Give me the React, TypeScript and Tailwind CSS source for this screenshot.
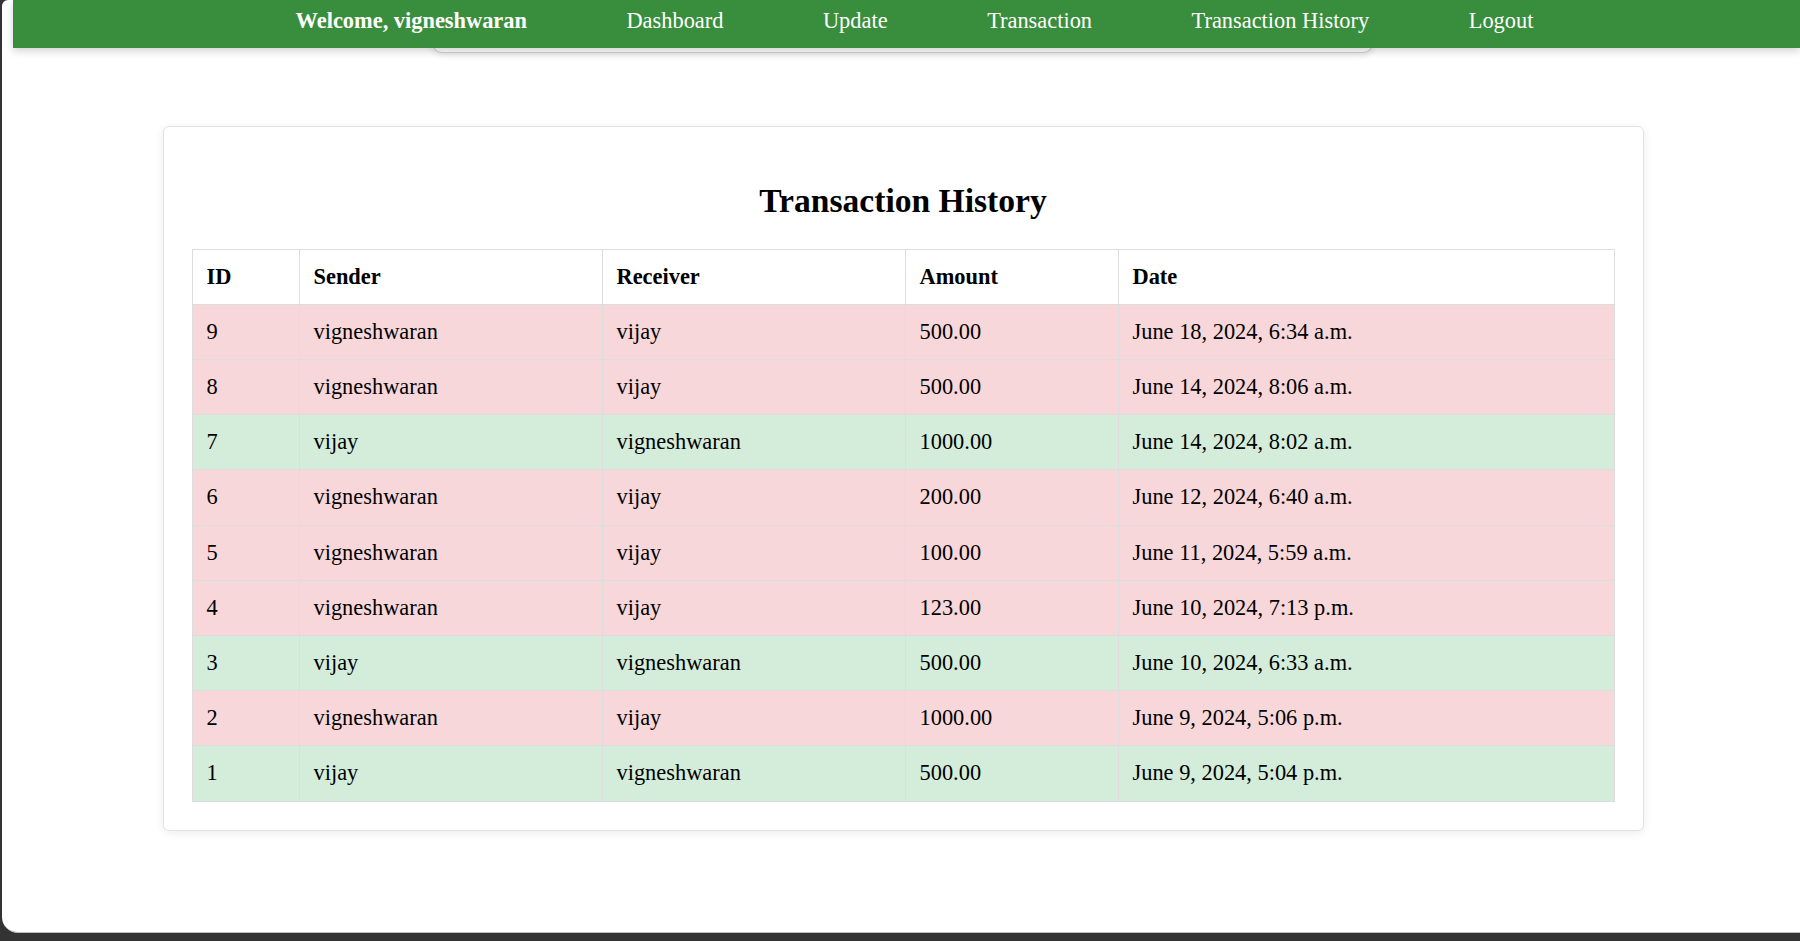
import React from "react";

type Tx = { id: number; sender: string; receiver: string; amount: string; date: string };

const me = "vigneshwaran";

const rows: Tx[] = [
  { id: 9, sender: "vigneshwaran", receiver: "vijay", amount: "500.00", date: "June 18, 2024, 6:34 a.m." },
  { id: 8, sender: "vigneshwaran", receiver: "vijay", amount: "500.00", date: "June 14, 2024, 8:06 a.m." },
  { id: 7, sender: "vijay", receiver: "vigneshwaran", amount: "1000.00", date: "June 14, 2024, 8:02 a.m." },
  { id: 6, sender: "vigneshwaran", receiver: "vijay", amount: "200.00", date: "June 12, 2024, 6:40 a.m." },
  { id: 5, sender: "vigneshwaran", receiver: "vijay", amount: "100.00", date: "June 11, 2024, 5:59 a.m." },
  { id: 4, sender: "vigneshwaran", receiver: "vijay", amount: "123.00", date: "June 10, 2024, 7:13 p.m." },
  { id: 3, sender: "vijay", receiver: "vigneshwaran", amount: "500.00", date: "June 10, 2024, 6:33 a.m." },
  { id: 2, sender: "vigneshwaran", receiver: "vijay", amount: "1000.00", date: "June 9, 2024, 5:06 p.m." },
  { id: 1, sender: "vijay", receiver: "vigneshwaran", amount: "500.00", date: "June 9, 2024, 5:04 p.m." },
];

const links = ["Dashboard", "Update", "Transaction", "Transaction History", "Logout"];

export default function App() {
  return (
    <div className="w-[1800px] h-[941px] bg-[#333] pl-[2px] pb-[8px] overflow-hidden font-['Liberation_Serif',serif] text-black">
      <div className="relative h-full bg-white rounded-bl-[16px] rounded-tl-[6px] overflow-hidden border-b border-[#bdbdbd]">
        {/* menu list peeking out under the bar */}
        <div className="absolute top-0 left-[430px] w-[941px] h-[53px] bg-white border border-[#cfcfcf] rounded-[10px] shadow-[0_2px_6px_rgba(0,0,0,0.12)]" />

        <nav className="relative z-10 ml-[11px] h-[48px] bg-[#388e3c] shadow-[0_3px_8px_rgba(0,0,0,0.18)] flex justify-center gap-[99.5px] pl-[16px] pt-[8px] text-white text-[22.4px] leading-[1.15]">
          <span className="font-bold">Welcome, {me}</span>
          {links.map((l) => (
            <a key={l} href="#" className="text-white">
              {l}
            </a>
          ))}
        </nav>

        <div className="pl-[4px]">
          <div className="mt-[78px] w-[1481px] mx-auto bg-white border border-[#e2e2e2] rounded-[6px] shadow-[0_2px_10px_rgba(0,0,0,0.08)] p-[28px]">
            <h2 className="text-center font-bold text-[33.6px] leading-[1.15] mt-[27px] mb-[28px]">Transaction History</h2>
            <table className="w-full border-collapse text-[22.4px] leading-[26.2px]">
              <thead>
                <tr className="bg-white">
                  <th className="w-[107px] border border-[#dddddd] p-[14px] text-left font-bold">ID</th>
                  <th className="w-[303px] border border-[#dddddd] p-[14px] text-left font-bold">Sender</th>
                  <th className="w-[303px] border border-[#dddddd] p-[14px] text-left font-bold">Receiver</th>
                  <th className="w-[213px] border border-[#dddddd] p-[14px] text-left font-bold">Amount</th>
                  <th className="border border-[#dddddd] p-[14px] text-left font-bold">Date</th>
                </tr>
              </thead>
              <tbody>
                {rows.map((r) => (
                  <tr key={r.id} className={r.receiver === me ? "bg-[#d4edda]" : "bg-[#f8d7da]"}>
                    <td className="border border-[#dddddd] p-[14px]">{r.id}</td>
                    <td className="border border-[#dddddd] p-[14px]">{r.sender}</td>
                    <td className="border border-[#dddddd] p-[14px]">{r.receiver}</td>
                    <td className="border border-[#dddddd] p-[14px]">{r.amount}</td>
                    <td className="border border-[#dddddd] p-[14px]">{r.date}</td>
                  </tr>
                ))}
              </tbody>
            </table>
          </div>
        </div>
      </div>
    </div>
  );
}
